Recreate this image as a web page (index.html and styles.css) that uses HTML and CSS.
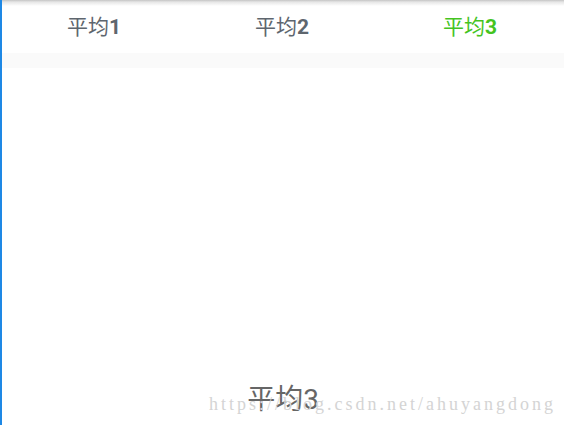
FILE: index.html
```html
<!DOCTYPE html>
<html lang="zh">
<head>
<meta charset="utf-8">
<link rel="stylesheet" href="styles.css">
</head>
<body>
<div class="page">
  <nav class="tabs">
    <div class="tab">平均<span class="num">1</span></div>
    <div class="tab">平均<span class="num">2</span></div>
    <div class="tab active">平均<span class="num">3</span></div>
  </nav>
  <div class="band"></div>
  <main class="content">
    <div class="label">平均3</div>
  </main>
  <div class="watermark">https://blog.csdn.net/ahuyangdong</div>
</div>
</body>
</html>
```
FILE: styles.css
```css
html, body {
  margin: 0;
  padding: 0;
  background: #ffffff;
}
.page {
  position: relative;
  width: 564px;
  height: 425px;
  display: flex;
  flex-direction: column;
  overflow: hidden;
  font-family: Roboto, "Noto Sans CJK SC", sans-serif;
}
.page::before {
  content: "";
  position: absolute;
  left: 0;
  top: 0;
  bottom: 0;
  width: 2px;
  background: #1e88e5;
  z-index: 2;
}
.tabs {
  height: 53px;
  display: grid;
  grid-template-columns: 1fr 1fr 1fr;
  align-items: center;
  background: linear-gradient(to bottom, #c4c4c4 0px, #e6e6e6 2px, #ffffff 6px);
}
.tab {
  text-align: center;
  font-size: 21px;
  color: #5e666e;
  line-height: 24px;
}
.tab .num {
  font-weight: bold;
}
.tab.active {
  color: #45c41f;
}
.band {
  height: 15px;
  background: #fafafa;
}
.content {
  flex: 1;
  display: flex;
  flex-direction: column;
  justify-content: flex-end;
  align-items: center;
  padding-bottom: 9px;
}
.label {
  font-size: 28px;
  color: #666666;
  line-height: 32px;
  padding-left: 2px;
}
.watermark {
  position: absolute;
  right: 8px;
  bottom: 11px;
  font-family: "Liberation Serif", serif;
  font-size: 18px;
  letter-spacing: 3px;
  color: #d4d4d4;
  line-height: 20px;
}
```
